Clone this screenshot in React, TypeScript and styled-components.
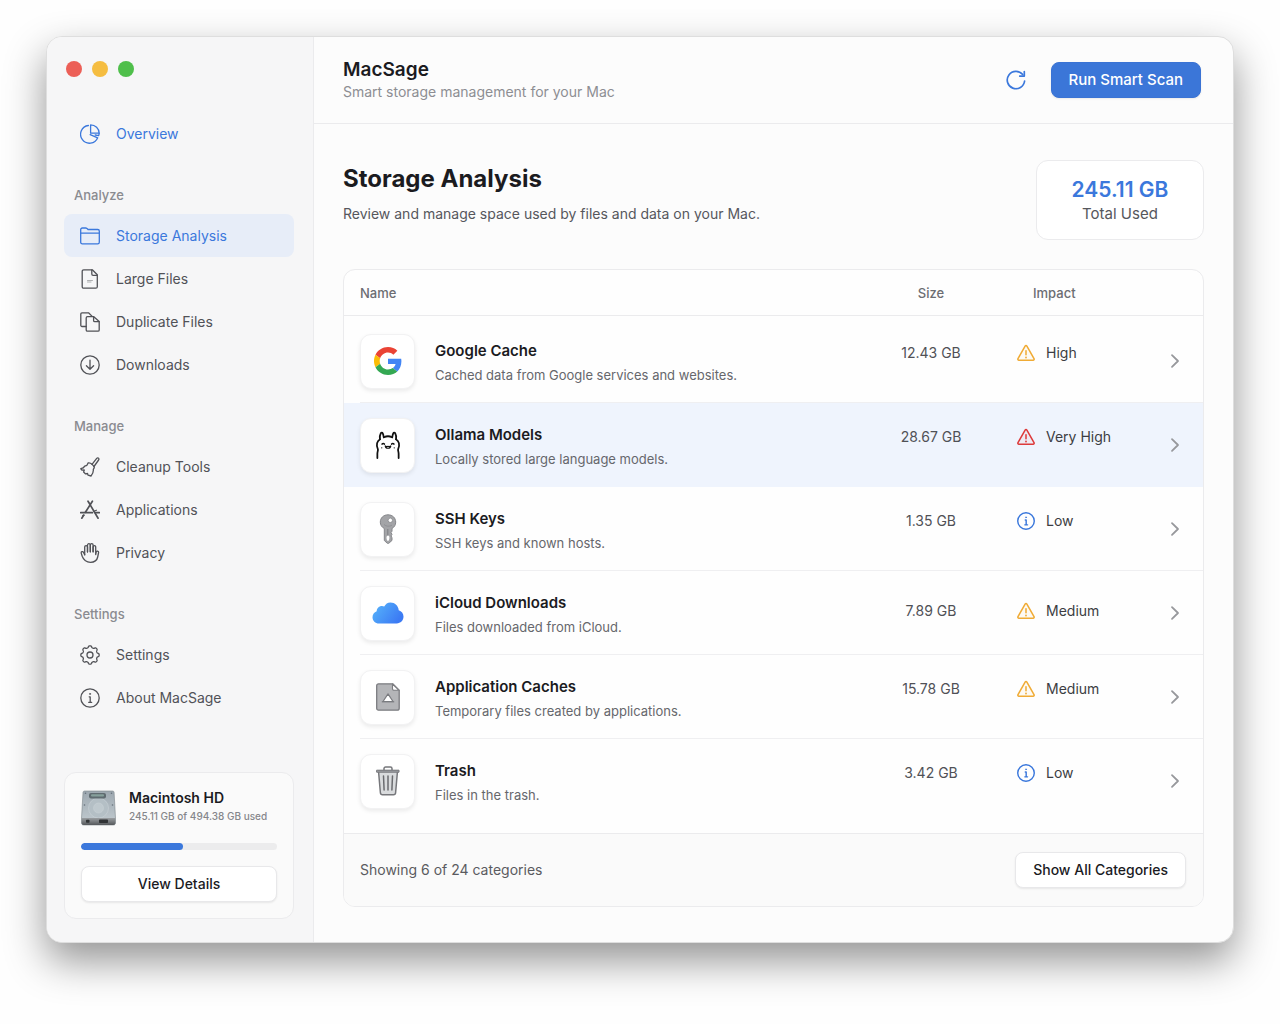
import React from "react";
import styled, { createGlobalStyle, css } from "styled-components";

const GlobalStyle = createGlobalStyle`
  *, *::before, *::after { box-sizing: border-box; }
  body {
    margin: 0;
    background: #fefefe;
    color: #1b1b1f;
    font-family: Inter, "Liberation Sans", sans-serif;
    font-size: 14px;
    line-height: 20px;
  }
  button { font: inherit; cursor: pointer; }
  h1, h2, p { margin: 0; }
`;

const blue = "#3b78dc";
const line = "#ebebed";

/* ---------- layout ---------- */

const Page = styled.div`
  min-height: 100vh;
  padding: 36px 46px 80px;
`;

const Window = styled.div`
  display: flex;
  border: 1px solid #dedede;
  border-radius: 16px;
  background: #fcfcfc;
  overflow: hidden;
  box-shadow: 0 18px 40px rgba(0, 0, 0, 0.42);
`;

const Sidebar = styled.aside`
  display: flex;
  flex-direction: column;
  flex: 0 0 267px;
  padding: 24px 19px 23px 17px;
  border-right: 1px solid ${line};
  background: #f6f6f7;
`;

const Main = styled.main`
  flex: 1;
  min-width: 0;
`;

/* ---------- sidebar ---------- */

const Lights = styled.div`
  display: flex;
  gap: 10px;
  padding: 0 2px;
  margin-bottom: 35px;
`;

const Light = styled.button<{ $color: string }>`
  width: 16px;
  height: 16px;
  padding: 0;
  border: 0;
  border-radius: 50%;
  background: ${(p) => p.$color};
`;

const NavLabel = styled.h2`
  margin: 31px 0 10px;
  padding-left: 10px;
  font-size: 13px;
  font-weight: 500;
  line-height: 18px;
  color: #8a8b90;
`;

const NavItem = styled.a<{ $tone?: "accent" | "selected" }>`
  display: flex;
  align-items: center;
  gap: 16px;
  height: 43px;
  padding: 0 16px;
  border-radius: 8px;
  font-size: 14px;
  color: #515257;
  text-decoration: none;
  svg { flex: none; }
  ${(p) => p.$tone && css`color: ${blue};`}
  ${(p) => p.$tone === "selected" && css`background: #e7edf8;`}
`;

const DiskCard = styled.section`
  margin-top: auto;
  padding: 16px;
  border: 1px solid ${line};
  border-radius: 12px;
  background: #fafafa;
`;

const DiskHead = styled.div`
  display: flex;
  align-items: center;
  gap: 13px;
  margin-bottom: 16px;
`;

const DiskTexts = styled.div`
  padding-bottom: 2px;
  line-height: 18px;
`;

const DiskName = styled.div`
  font-size: 14px;
  font-weight: 600;
`;

const DiskUse = styled.div`
  font-size: 10px;
  font-weight: 500;
  color: #85868a;
  white-space: nowrap;
`;

const Track = styled.div`
  height: 7px;
  margin-bottom: 16px;
  border-radius: 4px;
  background: #ececed;
  overflow: hidden;
`;

const Fill = styled.div`
  height: 100%;
  border-radius: 4px;
  background: ${blue};
`;

/* ---------- buttons ---------- */

const Button = styled.button<{ $wide?: boolean; $primary?: boolean }>`
  width: ${(p) => (p.$wide ? "100%" : "auto")};
  height: 36px;
  padding: 0 17px;
  border: 1px solid #e8e8ea;
  border-radius: 8px;
  background: #fff;
  box-shadow: 0 1px 2px rgba(0, 0, 0, 0.08);
  font-size: 14px;
  font-weight: 500;
  color: #1b1b1f;
  ${(p) =>
    p.$primary &&
    css`
      border-color: #3a73d4;
      background: #3b76d8;
      font-size: 15px;
      color: #fff;
    `}
`;

const IconButton = styled.button<{ $accent?: boolean }>`
  display: inline-flex;
  padding: 0;
  border: 0;
  background: none;
  color: ${(p) => (p.$accent ? blue : "#97989c")};
`;

/* ---------- header ---------- */

const TopBar = styled.header`
  display: flex;
  align-items: center;
  justify-content: space-between;
  height: 87px;
  padding: 0 32px 1px 29px;
  border-bottom: 1px solid ${line};
`;

const AppName = styled.div`
  font-size: 19px;
  font-weight: 600;
  line-height: 24px;
`;

const Tagline = styled.div`
  font-size: 14px;
  line-height: 20px;
  color: #8d8e93;
`;

const Actions = styled.div`
  display: flex;
  align-items: center;
  gap: 25px;
`;

const Content = styled.div`
  padding: 36px 29px 35px;
`;

const Intro = styled.div`
  display: flex;
  justify-content: space-between;
  align-items: flex-start;
  margin-bottom: 29px;
`;

const Title = styled.h1`
  margin-bottom: 6px;
  font-size: 24px;
  font-weight: 700;
  line-height: 38px;
`;

const Lead = styled.p`
  font-size: 14px;
  line-height: 20px;
  color: #56575c;
`;

const TotalCard = styled.div`
  width: 168px;
  padding: 15px;
  border: 1px solid ${line};
  border-radius: 12px;
  background: #fff;
  text-align: center;
`;

const TotalValue = styled.div`
  font-size: 21px;
  font-weight: 600;
  line-height: 28px;
  color: ${blue};
`;

const TotalLabel = styled.div`
  font-size: 15px;
  line-height: 20px;
  color: #56575c;
`;

/* ---------- table ---------- */

const Panel = styled.section`
  border: 1px solid ${line};
  border-radius: 12px;
  background: #fefefe;
  overflow: hidden;
`;

const Table = styled.table`
  width: 100%;
  table-layout: fixed;
  border-collapse: separate;
  border-spacing: 0;
  margin-bottom: 10px;
  td, th { padding: 0; }
  tbody::before { content: ""; display: block; height: 3px; }
`;

const Th = styled.th<{ $width?: number; $pad?: number; $align?: string }>`
  && { padding-left: ${(p) => p.$pad || 0}px; }
  width: ${(p) => (p.$width ? `${p.$width}px` : "auto")};
  height: 46px;
  border-bottom: 1px solid ${line};
  font-size: 13px;
  font-weight: 500;
  text-align: ${(p) => p.$align || "left"};
  color: #6c6d72;
`;

const Row = styled.tr<{ $active?: boolean }>`
  height: 84px;
  background: linear-gradient(#efeff1, #efeff1) 100% 100% / calc(100% - 16px) 1px no-repeat;
  &:last-child { background: none; }
  ${(p) => p.$active && css`background: #eff4fd;`}
`;

const NameCell = styled.div`
  display: flex;
  align-items: center;
  gap: 20px;
  padding-left: 16px;
`;

const Tile = styled.div`
  display: grid;
  place-items: center;
  flex: none;
  width: 55px;
  height: 55px;
  border: 1px solid #f2f2f3;
  border-radius: 11px;
  background: #fff;
  box-shadow: 0 2px 4px rgba(0, 0, 0, 0.08);
`;

const Texts = styled.div`
  padding-top: 3px;
`;

const ItemName = styled.div`
  font-size: 15px;
  font-weight: 600;
  line-height: 24px;
`;

const ItemNote = styled.div`
  font-size: 13px;
  line-height: 24px;
  color: #66676c;
`;

const ValueCell = styled.td<{ $centered?: boolean }>`
  && { padding-bottom: ${(p) => (p.$centered ? 4 : 16)}px; }
  font-size: 14px;
  text-align: center;
  color: #505156;
`;

const Impact = styled.div`
  display: flex;
  align-items: center;
  gap: 11px;
  padding-left: 34px;
  color: #3c3d42;
`;

const IconTint = styled.span<{ $color: string }>`
  display: inline-flex;
  color: ${(p) => p.$color};
`;

const ChevronCell = styled.td`
  text-align: center;
  line-height: 0;
`;

const PanelFooter = styled.footer`
  display: flex;
  align-items: center;
  justify-content: space-between;
  height: 73px;
  padding: 0 17px 0 16px;
  border-top: 1px solid ${line};
  background: #fafafa;
  font-size: 14px;
  color: #5a5b60;
`;

/* ---------- icons ---------- */

const Glyph = ({ children, size = 20, width = 1.3 }: { children: React.ReactNode; size?: number; width?: number }) => (
  <svg width={size} height={size} viewBox="0 0 20 20" fill="none" stroke="currentColor" strokeWidth={width} strokeLinecap="round" strokeLinejoin="round" aria-hidden="true">
    {children}
  </svg>
);

const PieIcon = () => (
  <Glyph>
    <path d="M8.400 1.500A8.900 8.900 0 1 0 17.700 13.800L10.200 10.600" />
    <path d="M10.600.8A8.600 8.600 0 0 1 19.200 9.200H10.600z" />
    <path d="M19.100 9.400c0 .9-.2 1.600-.5 2.200l-3.400-.6" />
  </Glyph>
);
const FolderIcon = () => (
  <Glyph>
    <path d="M.7 16.200V3.600C.7 2.600 1.400 2 2.300 2h3.400c.5 0 .9.200 1.300.5l1 1h9.700c1 0 1.600.7 1.600 1.600v11.100c0 1-.6 1.600-1.600 1.600H2.300c-1 0-1.600-.6-1.600-1.600z" />
    <path d="M.9 7.100h18.200" />
  </Glyph>
);
const FileIcon = () => (
  <Glyph>
    <path d="M3.700.8h8.600l5 5v11.900c0 .9-.6 1.500-1.500 1.500H3.700c-.9 0-1.500-.6-1.500-1.500V2.300c0-.9.6-1.500 1.500-1.500z" />
    <path d="M11.800 1v4c0 .8.500 1.300 1.300 1.300h4" />
    <path d="M7.500 11.500h5M7.500 13h3.500" strokeWidth=".8" opacity=".55" />
  </Glyph>
);
const CopyIcon = () => (
  <Glyph>
    <path d="M6.200 14.500H2c-.7 0-1.200-.5-1.200-1.200V2C.8 1.300 1.300.8 2 .8h6.500l3.700 3.600" />
    <path d="M7.500 4.700h6.300l5.400 4.900v8.300c0 .8-.5 1.300-1.300 1.300H7.500c-.8 0-1.300-.5-1.300-1.300V6c0-.8.5-1.300 1.300-1.300z" />
    <path d="M13.600 4.900v3.500c0 .8.400 1.200 1.200 1.200h4.200" />
  </Glyph>
);
const DownIcon = () => (
  <Glyph>
    <circle cx="10" cy="10" r="9.200" />
    <path d="M10 5.200v9M6.400 10.800l3.600 3.500 3.600-3.500" />
  </Glyph>
);
const BrushIcon = () => (
  <Glyph>
    <path d="M12 7.300l4.700-6c.6-.7 1.500-.7 2 0 .4.500.3 1.100-.1 1.700L14 9.500" />
    <path d="M8.200 5.900c1.200-.3 2.600.2 3.800 1.300 1.300 1 2.200 2.200 2.300 3.400l-1 1.700c.3 2.600-.7 4.900-2.300 6.700l-2.900-.8-.6-1.700-1.900.4-2-1.800.7-2.100-2.200.2-1.300-1.500c2-.4 3.200-1.200 3.900-2.600l2.200-.8z" />
  </Glyph>
);
const AppsIcon = () => (
  <Glyph width={1.7}>
    <path d="M8 1.200l2.200 3.600M12.400 1.200L5.400 12.300M3.600 15.200l-1.800 3" />
    <path d="M10.200 4.900l7.900 13.300" />
    <path d="M.6 12.700h11.800M15.600 12.700h3.800" />
    <path d="M2.800 15.600l1.400-.5M14 11.200l2.400-1" strokeWidth="1.200" />
  </Glyph>
);
const HandIcon = () => (
  <Glyph>
    <path d="M4.700 11.800V4a1.400 1.400 0 0 1 2.800 0v5" />
    <path d="M7.500 8.800V2.100a1.400 1.400 0 0 1 2.800 0v6.700" />
    <path d="M10.300 8.800V2.100a1.400 1.400 0 0 1 2.800 0v6.700" />
    <path d="M13.100 8.800V4a1.300 1.300 0 0 1 2.600 0v7.600l.5-2.500a1.200 1.200 0 0 1 2.400.4l-.9 4.500c-.7 3.200-3.300 5.300-7.200 5.300-4.100 0-6.900-2.300-8.300-6l-1-3.200a1.200 1.200 0 0 1 2.200-.9l1.300 2.600" />
  </Glyph>
);

const gearPath =
  Array.from({ length: 192 }, (_, i) => {
    const a = (i / 192) * Math.PI * 2;
    const r = 8.3 + 0.9 * Math.tanh(1.8 * Math.cos(8 * a));
    return `${i ? "L" : "M"}${(10 + r * Math.sin(a)).toFixed(2)} ${(10 - r * Math.cos(a)).toFixed(2)}`;
  }).join("") + "z";

const GearIcon = () => (
  <Glyph>
    <path d={gearPath} />
    <circle cx="10" cy="10" r="3" />
  </Glyph>
);
const InfoIcon = ({ size = 20, width = 1.3 }: { size?: number; width?: number }) => (
  <Glyph size={size} width={width}>
    <circle cx="10" cy="10" r="9.200" />
    <path d="M9.200 8.800h1v5.400M8.700 14.300h3" />
    <circle cx="10" cy="5.900" r=".6" fill="currentColor" strokeWidth=".6" />
  </Glyph>
);
const RefreshIcon = () => (
  <Glyph width={1.7}>
    <path d="M18.600 11A8.700 8.700 0 1 1 16.700 4.500" />
    <path d="M18.300 1.600v4.500h-4.600" />
  </Glyph>
);
const WarnIcon = () => (
  <Glyph size={18} width={1.7}>
    <path d="M9 2.300c.5-.8 1.500-.8 2 0l7.900 14c.4.8 0 1.700-1 1.700H2.100c-1 0-1.400-.9-1-1.700z" fill="currentColor" fillOpacity=".05" />
    <path d="M10 7.500v4.500" />
    <path d="M10 14.900v.1" strokeWidth="2" />
  </Glyph>
);
const ChevronIcon = () => (
  <Glyph width={1.8}>
    <path d="M7 4.200l6 5.800-6 5.800" />
  </Glyph>
);

const GoogleLogo = () => (
  <svg width="28" height="28" viewBox="0 0 48 48" aria-hidden="true">
    <path fill="#ea4335" d="M24 9.500c3.540 0 6.710 1.220 9.210 3.600l6.850-6.850C35.900 2.380 30.470 0 24 0 14.620 0 6.510 5.380 2.560 13.220l7.980 6.190C12.430 13.720 17.740 9.500 24 9.500z" />
    <path fill="#4285f4" d="M46.980 24.550c0-1.570-.15-3.090-.38-4.550H24v9.020h12.940c-.58 2.960-2.260 5.480-4.780 7.180l7.730 6c4.510-4.180 7.090-10.360 7.090-17.650z" />
    <path fill="#fbbc05" d="M10.530 28.590c-.48-1.450-.76-2.990-.76-4.590s.27-3.140.76-4.590l-7.980-6.190C.92 16.460 0 20.120 0 24c0 3.880.92 7.540 2.560 10.780l7.970-6.190z" />
    <path fill="#34a853" d="M24 48c6.480 0 11.930-2.130 15.890-5.810l-7.730-6c-2.150 1.450-4.920 2.300-8.160 2.300-6.260 0-11.570-4.220-13.470-9.910l-7.980 6.190C6.510 42.620 14.620 48 24 48z" />
  </svg>
);

const OllamaLogo = () => (
  <svg width="28" height="30" viewBox="0 0 30 32" fill="none" stroke="#111" strokeWidth="1.900" strokeLinecap="round" strokeLinejoin="round" aria-hidden="true">
    <path d="M3.600 30v-4.500c0-2.200.8-3.400.6-4.800-1.100-2.200-1.500-4.300-.9-6.700.5-1.900 1.500-3.200 3.200-4.200" />
    <path d="M26.400 30v-4.500c0-2.200-.8-3.400-.6-4.800 1.100-2.200 1.500-4.300.9-6.700-.5-1.900-1.500-3.200-3.200-4.200" />
    <path d="M6.300 9.800c-.2-2.500 0-4.700 1-6.400.6-1 1.600-.9 2.100.1.600 1.300.9 2.700 1 4.200" />
    <path d="M23.700 9.800c.2-2.500 0-4.700-1-6.400-.6-1-1.600-.9-2.100.1-.6 1.300-.9 2.700-1 4.200" />
    <path d="M10.700 7.700c2.600-1.300 6-1.300 8.600 0" />
    <path d="M8.700 15c.7-.8 1.700-.8 2.400 0M18.900 15c.7-.8 1.700-.8 2.400 0" strokeWidth="1.700" />
    <path d="M12 17c.4 3.400 5.600 3.400 6 0-.8.8-1.800.9-3 .3-1.200.6-2.200.5-3-.3z" strokeWidth="1.200" />
    <circle cx="8.300" cy="19" r=".7" fill="#111" stroke="none" />
    <circle cx="21.700" cy="19" r=".7" fill="#111" stroke="none" />
  </svg>
);

const KeyArt = () => (
  <svg width="18" height="30" viewBox="0 0 18 30" aria-hidden="true">
    <path d="M9 .8c4.500 0 7.700 3.100 7.700 7.300 0 3-1.400 5-3.700 6.400v2.700l-1 1.400 1 1.700-.9 1.600.9 2v2.500L9.800 29.300H8.300L5.300 26.500V14.500C2.800 13.200 1.300 11 1.300 8.100 1.300 3.900 4.500.8 9 .8z" fill="#a3a4a7" stroke="#85868a" strokeWidth="1" />
    <circle cx="11.300" cy="6.300" r="2.200" fill="#fff" stroke="#7d7e82" strokeWidth=".7" />
    <path d="M5 10.500c2 2 5.500 2.300 8 .7" fill="none" stroke="#8b8c90" strokeWidth=".8" />
    <path d="M8.800 15v7" stroke="#7d7e82" strokeWidth="1" />
    <path d="M9 21.500c1.300 0 1.700 1.600 1.300 3.300-.3 1.400-.7 2.200-1.300 2.200s-1.100-.8-1.400-2.200c-.3-1.700.1-3.300 1.400-3.300z" fill="#fff" />
  </svg>
);

const CloudArt = () => (
  <svg width="32" height="22" viewBox="0 0 32 22" aria-hidden="true">
    <defs>
      <linearGradient id="cloud" x1="0" y1="0" x2="1" y2=".5">
        <stop offset="0" stopColor="#58b7fb" />
        <stop offset="1" stopColor="#3c7bf4" />
      </linearGradient>
    </defs>
    <path fill="url(#cloud)" d="M7 21.500C3.300 21.500.5 18.700.5 15.200c0-2.700 1.700-5 4.200-5.900C4.800 6.200 7.300 4 10 4.100c.8 0 1.500.2 2.200.5C13.600 2.100 15.600.5 18.400.5c4.500 0 8 3.300 8.300 7.700 2.900.8 4.800 3.200 4.800 6.400 0 3.900-2.900 6.900-6.800 6.900z" />
  </svg>
);

const CacheArt = () => (
  <svg width="24" height="28" viewBox="0 0 24 28" strokeLinejoin="round" aria-hidden="true">
    <path d="M2.500.8h14.200l6.500 6.400v18c0 1.200-.8 2-2 2H2.500c-1.100 0-1.800-.8-1.800-2V2.800c0-1.200.7-2 1.800-2z" fill="#b4b5b8" stroke="#7b7c80" strokeWidth="1.300" />
    <path d="M16.500 1v4.700c0 1 .6 1.600 1.500 1.600h5z" fill="#fff" stroke="#7b7c80" strokeWidth="1.100" />
    <path d="M12 10.800l5 7.700H7z" fill="#fff" stroke="#7b7c80" strokeWidth="1.200" />
    <path d="M5.800 18.800h12.400" stroke="#7b7c80" strokeWidth="1.200" />
  </svg>
);

const TrashArt = () => (
  <svg width="26" height="30" viewBox="0 0 26 30" strokeLinecap="round" strokeLinejoin="round" aria-hidden="true">
    <path d="M3.500 5h19l-1.900 21.800c-.1 1.200-.9 2-2.100 2h-11c-1.200 0-2-.8-2.100-2z" fill="#d9dbdd" stroke="#76777b" strokeWidth="1.500" />
    <path d="M9 3.800V2.600C9 1.600 9.700 1 10.600 1h4.800c.9 0 1.600.6 1.600 1.600v1.200" fill="none" stroke="#76777b" strokeWidth="1.500" />
    <path d="M2 4.200h22v2H2z" fill="#a0a1a5" stroke="#76777b" strokeWidth="1" />
    <path d="M8.500 10l.6 14M13 10v14M17.500 10l-.6 14" stroke="#6a6b6f" strokeWidth="1.500" />
  </svg>
);

const DiskArt = () => (
  <svg width="35" height="36" viewBox="0 0 35 36" aria-hidden="true">
    <defs>
      <linearGradient id="disk" x1="0" y1="0" x2="0" y2="1">
        <stop offset="0" stopColor="#9da8b0" />
        <stop offset="1" stopColor="#c3ccd1" />
      </linearGradient>
      <linearGradient id="diskBase" x1="0" y1="0" x2="0" y2="1">
        <stop offset="0" stopColor="#9a9ea1" />
        <stop offset="1" stopColor="#55585b" />
      </linearGradient>
    </defs>
    <path d="M3.500 1h28c1 0 1.500.6 1.600 1.500L34.500 28v5c0 1.200-.8 2-2 2h-30c-1.200 0-2-.8-2-2v-5L2 2.500C2.100 1.600 2.600 1 3.500 1z" fill="url(#disk)" stroke="#7e878c" strokeWidth=".6" />
    <circle cx="17.500" cy="18" r="10" fill="#b4bfc5" stroke="#c9d2d6" strokeWidth=".6" />
    <circle cx="17.500" cy="18" r="5" fill="#bfc9ce" stroke="#cbd3d7" strokeWidth=".5" />
    <rect x="8" y="3" width="17" height="5.500" rx="2" fill="#5f6b70" />
    <rect x="10" y="4.200" width="13" height="2.200" rx="1" fill="#86a09b" />
    <path d="M.6 28h33.800v5c0 1.200-.8 2-2 2H2.600c-1.200 0-2-.8-2-2z" fill="url(#diskBase)" />
    <rect x="5" y="29.800" width="3.500" height="3" rx=".8" fill="#303335" />
    <rect x="18" y="29.600" width="9" height="3.400" rx=".8" fill="#303335" />
    <g fill="#66707a">
      <circle cx="4.500" cy="3.200" r=".8" />
      <circle cx="30.500" cy="3.200" r=".8" />
      <circle cx="3.500" cy="15" r=".8" />
      <circle cx="31.500" cy="15" r=".8" />
    </g>
  </svg>
);

/* ---------- data ---------- */

type NavEntry = { text: string; icon: React.ReactNode; selected?: boolean };

const groups: { label: string; items: NavEntry[] }[] = [
  {
    label: "Analyze",
    items: [
      { text: "Storage Analysis", icon: <FolderIcon />, selected: true },
      { text: "Large Files", icon: <FileIcon /> },
      { text: "Duplicate Files", icon: <CopyIcon /> },
      { text: "Downloads", icon: <DownIcon /> },
    ],
  },
  {
    label: "Manage",
    items: [
      { text: "Cleanup Tools", icon: <BrushIcon /> },
      { text: "Applications", icon: <AppsIcon /> },
      { text: "Privacy", icon: <HandIcon /> },
    ],
  },
  {
    label: "Settings",
    items: [
      { text: "Settings", icon: <GearIcon /> },
      { text: "About MacSage", icon: <InfoIcon /> },
    ],
  },
];

const impactColor: Record<string, string> = {
  High: "#f0ab35",
  Medium: "#f0ab35",
  "Very High": "#dd3b3b",
  Low: "#3b78dc",
};

type Category = { name: string; note: string; size: string; impact: string; art: React.ReactNode; active?: boolean; centered?: boolean };

const categories: Category[] = [
  { name: "Google Cache", note: "Cached data from Google services and websites.", size: "12.43 GB", impact: "High", art: <GoogleLogo /> },
  { name: "Ollama Models", note: "Locally stored large language models.", size: "28.67 GB", impact: "Very High", art: <OllamaLogo />, active: true },
  { name: "SSH Keys", note: "SSH keys and known hosts.", size: "1.35 GB", impact: "Low", art: <KeyArt /> },
  { name: "iCloud Downloads", note: "Files downloaded from iCloud.", size: "7.89 GB", impact: "Medium", art: <CloudArt />, centered: true },
  { name: "Application Caches", note: "Temporary files created by applications.", size: "15.78 GB", impact: "Medium", art: <CacheArt /> },
  { name: "Trash", note: "Files in the trash.", size: "3.42 GB", impact: "Low", art: <TrashArt /> },
];

const usedShare = 52;

export default function App() {
  return (
    <Page>
      <GlobalStyle />
      <Window>
        <Sidebar>
          <Lights>
            <Light $color="#ec5f57" aria-label="Close" />
            <Light $color="#f5bd41" aria-label="Minimize" />
            <Light $color="#4fbf4b" aria-label="Zoom" />
          </Lights>
          <nav>
            <NavItem href="#overview" $tone="accent">
              <PieIcon />
              Overview
            </NavItem>
            {groups.map((group) => (
              <div key={group.label}>
                <NavLabel>{group.label}</NavLabel>
                {group.items.map((item) => (
                  <NavItem key={item.text} href="#view" $tone={item.selected ? "selected" : undefined}>
                    {item.icon}
                    {item.text}
                  </NavItem>
                ))}
              </div>
            ))}
          </nav>
          <DiskCard>
            <DiskHead>
              <DiskArt />
              <DiskTexts>
                <DiskName>Macintosh HD</DiskName>
                <DiskUse>245.11 GB of 494.38 GB used</DiskUse>
              </DiskTexts>
            </DiskHead>
            <Track role="progressbar" aria-label="Disk space used" aria-valuemin={0} aria-valuemax={100} aria-valuenow={usedShare}>
              <Fill style={{ width: `${usedShare}%` }} />
            </Track>
            <Button $wide>View Details</Button>
          </DiskCard>
        </Sidebar>
        <Main>
          <TopBar>
            <div>
              <AppName>MacSage</AppName>
              <Tagline>Smart storage management for your Mac</Tagline>
            </div>
            <Actions>
              <IconButton $accent aria-label="Refresh">
                <RefreshIcon />
              </IconButton>
              <Button $primary>Run Smart Scan</Button>
            </Actions>
          </TopBar>
          <Content>
            <Intro>
              <div>
                <Title>Storage Analysis</Title>
                <Lead>Review and manage space used by files and data on your Mac.</Lead>
              </div>
              <TotalCard>
                <TotalValue>245.11 GB</TotalValue>
                <TotalLabel>Total Used</TotalLabel>
              </TotalCard>
            </Intro>
            <Panel>
              <Table>
                <thead>
                  <tr>
                    <Th $pad={16}>Name</Th>
                    <Th $width={104} $align="center">Size</Th>
                    <Th $width={164} $pad={50}>Impact</Th>
                    <Th $width={56} aria-label="Open" />
                  </tr>
                </thead>
                <tbody>
                  {categories.map((c) => (
                    <Row key={c.name} $active={c.active}>
                      <td>
                        <NameCell>
                          <Tile>{c.art}</Tile>
                          <Texts>
                            <ItemName>{c.name}</ItemName>
                            <ItemNote>{c.note}</ItemNote>
                          </Texts>
                        </NameCell>
                      </td>
                      <ValueCell $centered={c.centered}>{c.size}</ValueCell>
                      <ValueCell $centered={c.centered}>
                        <Impact>
                          <IconTint $color={impactColor[c.impact]}>
                            {c.impact === "Low" ? <InfoIcon size={18} width={1.6} /> : <WarnIcon />}
                          </IconTint>
                          {c.impact}
                        </Impact>
                      </ValueCell>
                      <ChevronCell>
                        <IconButton aria-label={`Open ${c.name}`}>
                          <ChevronIcon />
                        </IconButton>
                      </ChevronCell>
                    </Row>
                  ))}
                </tbody>
              </Table>
              <PanelFooter>
                <span>Showing 6 of 24 categories</span>
                <Button>Show All Categories</Button>
              </PanelFooter>
            </Panel>
          </Content>
        </Main>
      </Window>
    </Page>
  );
}
